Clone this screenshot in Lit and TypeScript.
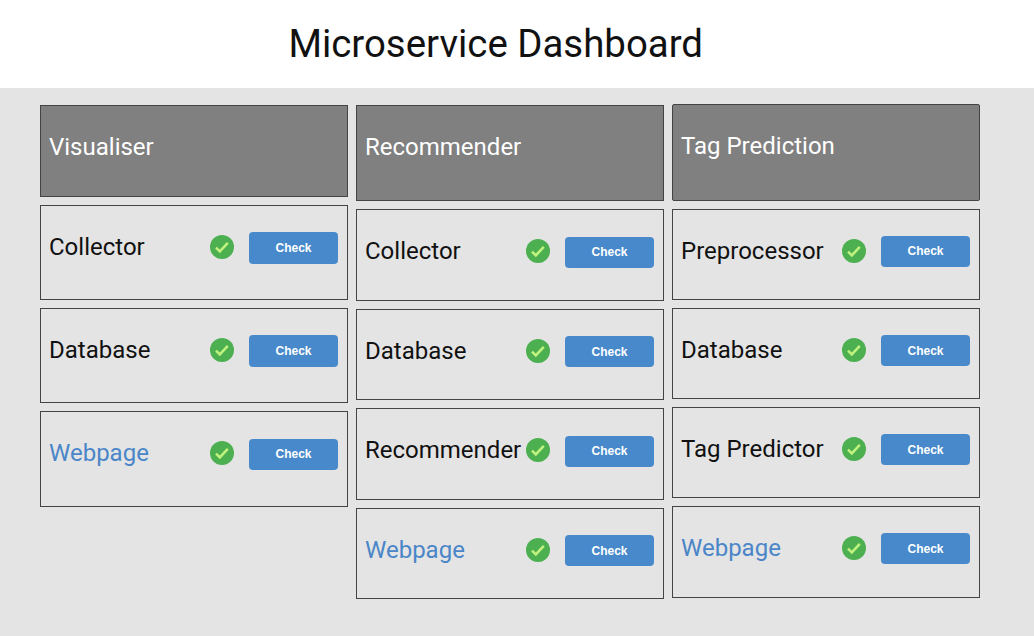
import { css, html, LitElement, nothing } from 'lit'
import { customElement } from 'lit/decorators.js'

interface Service {
  name: string
  link?: boolean
}

interface Board {
  title: string
  variant: string
  services: Service[]
}

const BOARDS: Board[] = [
  {
    title: 'Visualiser',
    variant: 'first',
    services: [{ name: 'Collector' }, { name: 'Database' }, { name: 'Webpage', link: true }],
  },
  {
    title: 'Recommender',
    variant: 'second',
    services: [
      { name: 'Collector' },
      { name: 'Database' },
      { name: 'Recommender' },
      { name: 'Webpage', link: true },
    ],
  },
  {
    title: 'Tag Prediction',
    variant: 'third',
    services: [
      { name: 'Preprocessor' },
      { name: 'Database' },
      { name: 'Tag Predictor' },
      { name: 'Webpage', link: true },
    ],
  },
]

@customElement('app-root')
export class AppRoot extends LitElement {
  private renderService(service: Service) {
    return html`
      <div class="row">
        <span class="name ${service.link ? 'link' : ''}">${service.name}</span>
        <svg class="status" viewBox="0 0 24 24" aria-hidden="true">
          <circle cx="12" cy="12" r="12" fill="#4caf50"></circle>
          <path d="M6 12.6l3.8 3.8 8-8.6" fill="none" stroke="#bff27e" stroke-width="2.6"></path>
        </svg>
        <button type="button" class="check">Check</button>
      </div>
    `
  }

  render() {
    return html`
      <header class="top"><h1>Microservice Dashboard</h1></header>
      <main class="boards">
        ${BOARDS.map(
          (board) => html`
            <section class="board ${board.variant}">
              <div class="head">${board.title}</div>
              ${board.services.length ? board.services.map((s) => this.renderService(s)) : nothing}
            </section>
          `,
        )}
      </main>
    `
  }

  static styles = css`
    :host {
      display: block;
      min-height: 636px;
      background: #e4e4e4;
      font-family: Roboto, sans-serif;
      color: #111;
    }

    .top {
      height: 88px;
      background: #fff;
      box-sizing: border-box;
      padding: 21px 0 0 288.4px;
    }

    .top h1 {
      margin: 0;
      font-size: 38.4px;
      font-weight: 400;
      line-height: 46px;
      color: #111;
    }

    .boards {
      display: grid;
      grid-template-columns: repeat(3, 308px);
      gap: 8px;
      align-items: start;
      padding: 17px 0 0 40px;
    }

    .board {
      display: flex;
      flex-direction: column;
      gap: 8px;
    }

    .first {
      --head-h: 92px;
      --row-h: 95.2px;
      --row-pad: 26.2px;
      --btn-h: 31.8px;
      --inner-shift: -3px;
    }

    .second {
      --head-h: 96px;
      --row-h: 91.6px;
      --row-pad: 26.5px;
      --btn-h: 31px;
      --inner-shift: -2px;
    }

    .third {
      --head-h: 96.6px;
      --row-h: 91.15px;
      --row-pad: 25.85px;
      --btn-h: 31.2px;
      --inner-shift: -1.5px;
      margin-top: -0.6px;
    }

    .head {
      box-sizing: border-box;
      height: var(--head-h);
      padding: 27px 8px 0;
      border: 1px solid #444;
      background: #808080;
      color: #fff;
      font-size: 24px;
      line-height: 28px;
    }

    .third .head {
      border-radius: 2px;
    }

    .row {
      box-sizing: border-box;
      height: var(--row-h);
      display: flex;
      align-items: center;
      align-content: flex-start;
      flex-wrap: wrap;
      padding: var(--row-pad) 9px 0 8px;
      border: 1px solid #444;
    }

    .name {
      flex: 1;
      font-size: 24px;
      line-height: 28px;
      margin-top: var(--inner-shift);
      white-space: nowrap;
    }

    .name.link {
      color: #4a86c8;
    }

    .status {
      width: 24px;
      height: 24px;
      margin: var(--inner-shift) 15px 0 0;
    }

    .check {
      width: 89px;
      height: var(--btn-h);
      padding: 0;
      border: 0;
      border-radius: 4px;
      background: #4789cb;
      color: #fff;
      font: bold 12px 'Liberation Sans', Arial, sans-serif;
    }
  `
}
